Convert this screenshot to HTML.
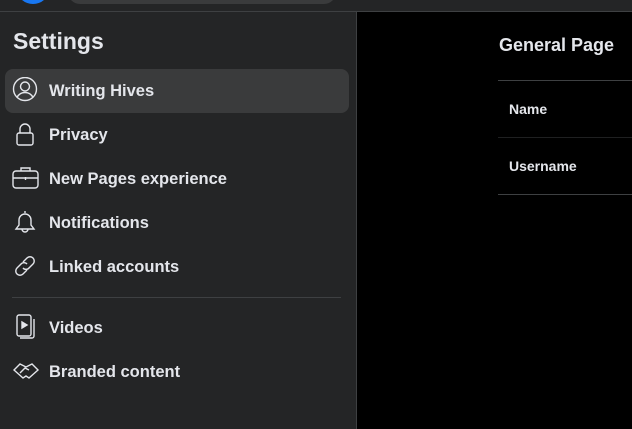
<!DOCTYPE html>
<html><head><style>
*{margin:0;padding:0;box-sizing:border-box}
body{width:632px;height:429px;overflow:hidden;background:#000;font-family:"Liberation Sans",sans-serif;position:relative}
.top{position:absolute;left:0;top:0;width:632px;height:12px;background:#242526;border-bottom:1px solid #3e4042}
.logo{position:absolute;left:18px;top:-22px;width:30px;height:26px;border-radius:50%;background:#1877f2}
.search{position:absolute;left:68px;top:-20px;width:268px;height:24px;border-radius:12px;background:#3a3b3c}
.side{position:absolute;left:0;top:12px;width:357px;height:417px;background:#242526;border-right:1px solid #3e4042}
h1{position:absolute;left:13px;font-size:23px;font-weight:bold;color:#e4e6eb;top:16px}
.item{position:absolute;left:5px;width:344px;height:44px;border-radius:8px;color:#e4e6eb;font-size:16.5px;font-weight:bold}
.item span{position:absolute;left:44px;top:13px}
.item svg{position:absolute;left:7px;top:8px}
.act{background:#3a3b3c}
.div{position:absolute;left:12px;top:285px;width:329px;height:1px;background:#3e4042}
.main h2{position:absolute;left:499px;top:35px;font-size:18px;font-weight:bold;color:#e4e6eb}
.ln{position:absolute;left:498px;width:140px;height:1px;background:#3e4042}
.lb{position:absolute;left:509px;font-size:14px;font-weight:bold;color:#e4e6eb}
</style></head><body>
<div class="top"><div class="logo"></div><div class="search"></div></div>
<div class="side">
<h1>Settings</h1>
<div class="item act" style="top:57px"><svg width="26" height="26" viewBox="0 0 26 26" fill="none" stroke="#e4e6eb" stroke-width="1.4"><circle cx="13" cy="12" r="11.5"/><circle cx="13" cy="9.5" r="4.5"/><path d="M5 20.5c2-4 5-5 8-5s6 1 8 5"/></svg><span>Writing Hives</span></div>
<div class="item" style="top:101px"><svg width="26" height="26" viewBox="0 0 26 26" fill="none" stroke="#e4e6eb" stroke-width="1.4"><path d="M8 12V8a5 5 0 0110 0v4"/><rect x="5" y="12" width="16" height="12" rx="2"/></svg><span>Privacy</span></div>
<div class="item" style="top:145px"><svg width="28" height="26" viewBox="0 0 28 26" fill="none" stroke="#e4e6eb" stroke-width="1.4"><rect x="1" y="6" width="25" height="17" rx="3"/><path d="M9 6V3h9v3M1 13h25M13.5 12v3"/></svg><span>New Pages experience</span></div>
<div class="item" style="top:189px"><svg width="26" height="26" viewBox="0 0 26 26" fill="none" stroke="#e4e6eb" stroke-width="1.4"><path d="M13 2v2M7 11a6 6 0 0112 0v5l3 4H4l3-4z"/><path d="M10 20a3 3 0 006 0"/></svg><span>Notifications</span></div>
<div class="item" style="top:233px"><svg width="26" height="26" viewBox="0 0 26 26" fill="none" stroke="#e4e6eb" stroke-width="1.4"><path d="M11 9l4-4a4 4 0 016 6l-4 4a4 4 0 01-6 0"/><path d="M15 17l-4 4a4 4 0 01-6-6l4-4a4 4 0 016 0"/></svg><span>Linked accounts</span></div>
<div class="div"></div>
<div class="item" style="top:294px"><svg width="26" height="26" viewBox="0 0 26 26" fill="none" stroke="#e4e6eb" stroke-width="1.4"><rect x="5" y="1" width="14" height="21" rx="2"/><path d="M8 24h12a2 2 0 002-2V5"/><path d="M10 8l5 3-5 3z" fill="#e4e6eb"/></svg><span>Videos</span></div>
<div class="item" style="top:338px"><svg width="28" height="26" viewBox="0 0 28 26" fill="none" stroke="#e4e6eb" stroke-width="1.4"><path d="M2 12l6-6 6 3 6-3 6 6-9 8-3-2-3 2z"/><path d="M8 15l5-5 4 2"/></svg><span>Branded content</span></div>
</div>
<div class="main">
<h2>General Page</h2>
<div class="ln" style="top:80px"></div>
<div class="lb" style="top:101px">Name</div>
<div class="ln" style="top:137px;background:#1f2021"></div>
<div class="lb" style="top:158px">Username</div>
<div class="ln" style="top:194px"></div>
</div>
</body></html>
